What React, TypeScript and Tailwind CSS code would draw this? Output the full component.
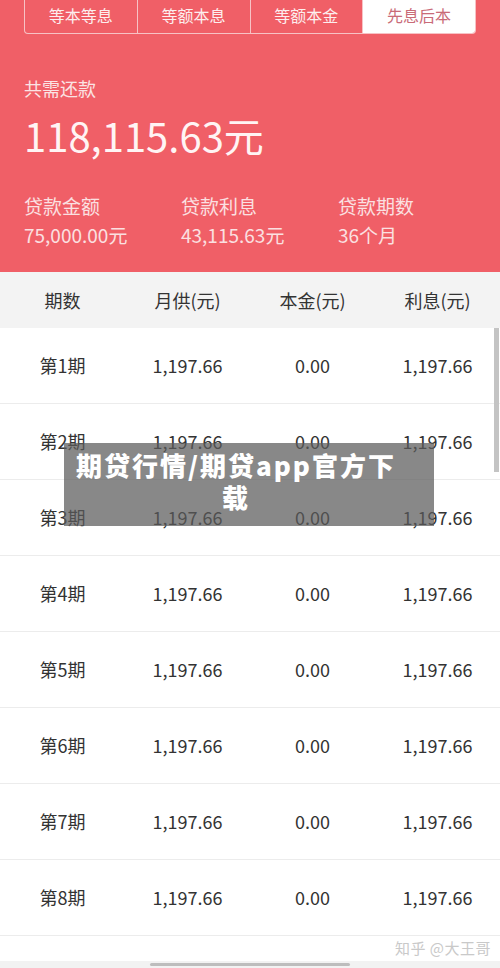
import React from "react";

const rows = Array.from({ length: 8 }, (_, i) => i + 1);

export default function App() {
  const font = { fontFamily: '"Noto Sans CJK SC", "Noto Sans", sans-serif' };
  return (
    <div className="relative w-[500px] h-[968px] overflow-hidden bg-white" style={font}>
      <div className="bg-[#f05f67] h-[272px] flex flex-col">
        <div className="mx-[24px] flex h-[34px] rounded-b-[4px] border border-t-0 border-[#f7c2c5] overflow-hidden">
          {["等本等息", "等额本息", "等额本金"].map((t) => (
            <div key={t} className="flex-1 flex items-center justify-center text-[#fdeeee] text-[16px] border-r border-[#f7c2c5] pb-[4px]">
              {t}
            </div>
          ))}
          <div className="flex-1 flex items-center justify-center bg-white text-[#c96b78] text-[16px] pb-[4px]">先息后本</div>
        </div>
        <div className="px-[24px] text-white">
          <div className="mt-[41px] text-[18px] leading-[26px] text-[#fbe3e4]">共需还款</div>
          <div className="mt-[8px] text-[40px] leading-[52px] text-[#fff4f4]">118,115.63元</div>
          <div className="mt-[31px] flex text-[#fbe0e1]">
            {[
              ["贷款金额", "75,000.00元"],
              ["贷款利息", "43,115.63元"],
              ["贷款期数", "36个月"],
            ].map(([a, b]) => (
              <div key={a} className="w-[157px] shrink-0">
                <div className="text-[19px] leading-[28px]">{a}</div>
                <div className="text-[19px] leading-[28px] mt-[1px]">{b}</div>
              </div>
            ))}
          </div>
        </div>
      </div>
      <div className="grid grid-cols-4 h-[56px] bg-[#f3f3f3] text-[#333] text-[18px] items-center text-center">
        <div>期数</div>
        <div>月供(元)</div>
        <div>本金(元)</div>
        <div>利息(元)</div>
      </div>
      {rows.map((r) => (
        <div key={r} className="grid grid-cols-4 h-[76px] border-b border-[#ececec] items-center text-center text-[#333] text-[18px]">
          <div>第{r}期</div>
          <div>1,197.66</div>
          <div>0.00</div>
          <div>1,197.66</div>
        </div>
      ))}
      <div className="absolute left-[494px] top-[328px] w-[5px] h-[144px] bg-[#c4c4c4]" />
      <div className="absolute left-0 right-0 top-[961px] h-[7px] bg-[#f2f2f2]">
        <div className="absolute left-[150px] w-[200px] top-[2px] h-[3px] rounded bg-[#bdbdbd]" />
      </div>
      <div className="absolute left-[395px] top-[937px] text-[15px] text-[#c9c9c9] tracking-[0.5px]">知乎 @大王哥</div>
      <div className="absolute left-[64px] top-[443px] w-[370px] h-[83px] bg-[rgba(90,90,90,0.72)] flex items-center justify-center pb-[8px] pr-[26px]">
        <div className="w-[330px] text-white font-black text-[26px] tracking-[2px] leading-[32px] text-center">期贷行情/期贷app官方下载</div>
      </div>
    </div>
  );
}
